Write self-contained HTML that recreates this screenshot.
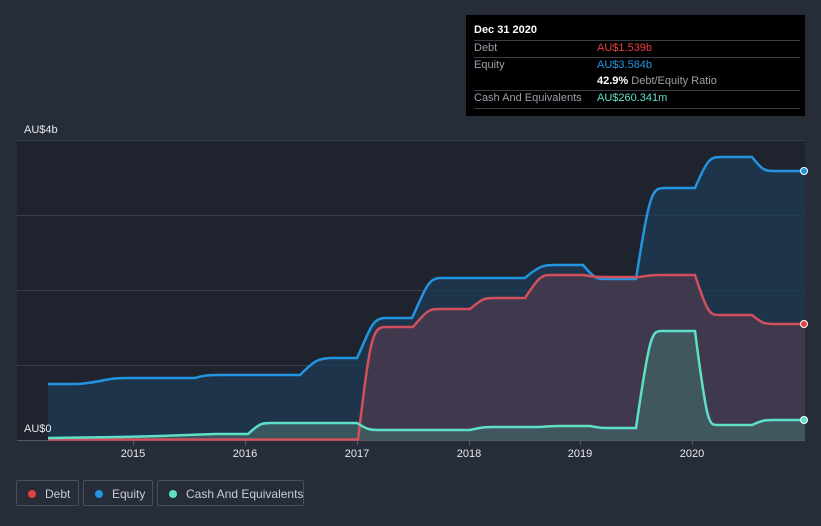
<!DOCTYPE html>
<html><head><style>
html,body{margin:0;width:821px;height:526px;overflow:hidden}
body{background:#262d39;font-family:"Liberation Sans",sans-serif;position:relative}
.tt{position:absolute;left:466px;top:15px;width:339px;height:101px;background:#000;}
.tt .r{position:absolute;left:8px;right:5px;font-size:11px;color:#9aa0a8;white-space:nowrap}
.leg{position:absolute;top:480px;height:26px;border:1px solid #4a505b;border-radius:2px;color:#c9ccd1;font-size:12px;line-height:26px;box-sizing:border-box;white-space:nowrap}
.leg i{position:absolute;left:11px;top:9px;width:8px;height:8px;border-radius:50%}
</style></head><body>
<svg width="821" height="526" style="position:absolute;left:0;top:0">
<rect x="17" y="140" width="788" height="300" fill="#1e232d"/>
<g stroke="#3a404b" stroke-width="1">
<line x1="17" y1="140.5" x2="805" y2="140.5"/><line x1="17" y1="215.5" x2="805" y2="215.5"/><line x1="17" y1="290.5" x2="805" y2="290.5"/><line x1="17" y1="365.5" x2="805" y2="365.5"/>
</g>
<path d="M48,384 L75,384 C85,384 95,382 105,380 C115,378 120,378 130,378 L195,378 C205,375 210,375 220,375 L300,375 C315,360 318,359 330,358 L357,358 C370,330 372,318 385,318 L412,318 C425,290 428,278 440,278 L525,278 C540,265 545,265 555,265 L583,265 C595,279 597,279 605,279 L636,279 C650,190 652,188 665,188 L695,188 C707,160 710,157 720,157 L752,157 C763,171 765,171 775,171 L805,171 L805,440 L48,440Z" fill="#1e3b55" opacity="0.75"/>
<path d="M48,440 L358,440 C370,340 372,327 385,327 L413,327 C428,309 430,309 440,309 L470,309 C483,298 485,298 495,298 L525,298 C540,275 542,275 552,275 L583,275 C595,277 598,277 610,277 L640,277 C650,275 655,275 665,275 L695,275 C708,315 710,315 720,315 L752,315 C763,324 765,324 775,324 L805,324 L805,440Z" fill="#4a3a4c" opacity="0.8"/>
<path d="M48,438 L120,437 L160,436 L215,434 L248,434 C260,423 262,423 272,423 L357,423 C368,430 370,430 380,430 L470,430 C483,427 485,427 495,427 L540,427 C550,426 552,426 560,426 L590,426 C600,428 602,428 610,428 L636,428 C650,331 652,331 662,331 L695,331 C707,425 709,425 717,425 L752,425 C763,420 765,420 775,420 L805,420 L805,440 L48,440Z" fill="#3f5f62" opacity="0.8"/>
<line x1="17" y1="440.5" x2="805" y2="440.5" stroke="#555b66"/>
<g stroke="#555b66"><line x1="133.5" y1="440" x2="133.5" y2="445"/><line x1="245.5" y1="440" x2="245.5" y2="445"/><line x1="357.5" y1="440" x2="357.5" y2="445"/><line x1="469.5" y1="440" x2="469.5" y2="445"/><line x1="580.5" y1="440" x2="580.5" y2="445"/><line x1="692.5" y1="440" x2="692.5" y2="445"/></g>
<path d="M48,384 L75,384 C85,384 95,382 105,380 C115,378 120,378 130,378 L195,378 C205,375 210,375 220,375 L300,375 C315,360 318,359 330,358 L357,358 C370,330 372,318 385,318 L412,318 C425,290 428,278 440,278 L525,278 C540,265 545,265 555,265 L583,265 C595,279 597,279 605,279 L636,279 C650,190 652,188 665,188 L695,188 C707,160 710,157 720,157 L752,157 C763,171 765,171 775,171 L805,171" fill="none" stroke="#2394df" stroke-width="2.5"/>
<path d="M48,439.5 L358,439.5 C370,340 372,327 385,327 L413,327 C428,309 430,309 440,309 L470,309 C483,298 485,298 495,298 L525,298 C540,275 542,275 552,275 L583,275 C595,277 598,277 610,277 L640,277 C650,275 655,275 665,275 L695,275 C708,315 710,315 720,315 L752,315 C763,324 765,324 775,324 L805,324" fill="none" stroke="#d2505c" stroke-width="2.5"/>
<path d="M48,438 L120,437 L160,436 L215,434 L248,434 C260,423 262,423 272,423 L357,423 C368,430 370,430 380,430 L470,430 C483,427 485,427 495,427 L540,427 C550,426 552,426 560,426 L590,426 C600,428 602,428 610,428 L636,428 C650,331 652,331 662,331 L695,331 C707,425 709,425 717,425 L752,425 C763,420 765,420 775,420 L805,420" fill="none" stroke="#5ee0c8" stroke-width="2.5"/>
<circle cx="804" cy="171" r="3.5" fill="#2394df" stroke="#fff" stroke-width="1"/>
<circle cx="804" cy="324" r="3.5" fill="#e64141" stroke="#fff" stroke-width="1"/>
<circle cx="804" cy="420" r="3.5" fill="#5ee0c8" stroke="#fff" stroke-width="1"/>
<g fill="#e6e8eb" font-size="11" font-family="Liberation Sans">
<text x="24" y="133">AU$4b</text><text x="24" y="432">AU$0</text>
<g text-anchor="middle"><text x="133" y="457">2015</text><text x="245" y="457">2016</text><text x="357" y="457">2017</text><text x="469" y="457">2018</text><text x="580" y="457">2019</text><text x="692" y="457">2020</text></g>
</g>
</svg>
<div class="tt">
<div class="r" style="top:9px;color:#fff;font-weight:bold">Dec 31 2020</div>
<div style="position:absolute;left:8px;right:5px;top:25px;border-top:1px solid #3a3f47"></div>
<div class="r" style="top:27px">Debt<span style="position:absolute;left:123px;color:#e64141">AU$1.539b</span></div>
<div style="position:absolute;left:8px;right:5px;top:42px;border-top:1px solid #3a3f47"></div>
<div class="r" style="top:44px">Equity<span style="position:absolute;left:123px;color:#2394df">AU$3.584b</span></div>
<div class="r" style="top:60px"><span style="position:absolute;left:123px"><b style="color:#fff">42.9%</b> Debt/Equity Ratio</span></div>
<div style="position:absolute;left:8px;right:5px;top:75px;border-top:1px solid #3a3f47"></div>
<div class="r" style="top:77px">Cash And Equivalents<span style="position:absolute;left:123px;color:#5ee0c8">AU$260.341m</span></div>
<div style="position:absolute;left:8px;right:5px;top:93px;border-top:1px solid #3a3f47"></div>
</div>
<div class="leg" style="left:16px;width:63px"><i style="background:#e64141"></i><span style="position:absolute;left:28px">Debt</span></div>
<div class="leg" style="left:83px;width:70px"><i style="background:#2394df"></i><span style="position:absolute;left:28px">Equity</span></div>
<div class="leg" style="left:157px;width:147px"><i style="background:#5ee0c8"></i><span style="position:absolute;left:28px">Cash And Equivalents</span></div>
</body></html>
